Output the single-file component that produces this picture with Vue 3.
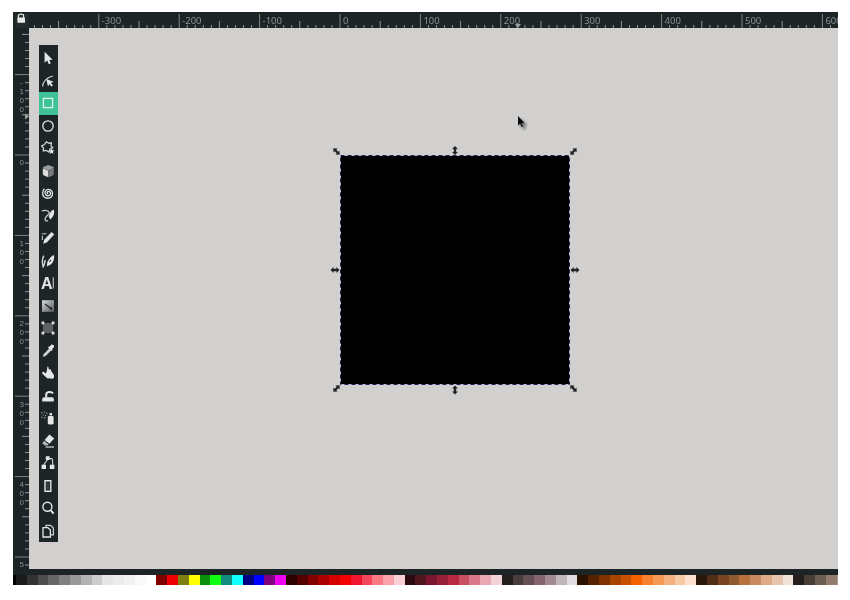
<script setup>
const W = '#e4e6e6'
const tools = [
  { id: 'selector', p: [{ d: 'M4.6 1.8V12.8L7.2 10.6 8.8 14.2 10.8 13.3 9.3 9.9 12.6 9.7Z', f: W }] },
  { id: 'node', p: [
    { d: 'M2.6 13.5C3 8.8 6.2 4.6 13 3', s: '#c9cccc', w: 1.2 },
    { d: 'M6.2 6 13.6 8.8 10.9 9.9 13 12.4 11.2 13.6 9.4 11 8 13.4Z', f: W }
  ] },
  { id: 'rect', active: true, p: [{ d: 'M3.4 3.4H12.6V12.6H3.4Z', s: '#e3f7ef', w: 1.3 }] },
  { id: 'ellipse', p: [{ d: 'M13.2 8A5.2 5.2 0 1 1 2.8 8 5.2 5.2 0 1 1 13.2 8Z', s: W, w: 1.3 }] },
  { id: 'star', p: [
    { d: 'M6.4 1.8 8.8 3.2 11.4 2.8 11 6 12.8 7.8 10 9 8.9 12 6.2 10.4 3.4 11 3.4 8 1.6 6 4.4 4.6Z', s: '#d0d3d3', w: 1.3 },
    { d: 'M11.6 8.2 12.4 10.2 14.6 10.4 13 11.8 13.5 14 11.6 12.8 9.7 14 10.2 11.8 8.6 10.4 10.8 10.2Z', f: W }
  ] },
  { id: 'box', p: [
    { d: 'M8.2 2 13.6 4 13.8 5 8.8 7.6 2.8 5.2 3.2 4Z', f: '#9b9e9e' },
    { d: 'M2.8 5.4 8.4 7.8V14.2L4 12.6C3.2 12.2 2.8 11.6 2.8 10.8Z', f: '#dcdede' },
    { d: 'M8.8 7.8 13.8 5.2V10.8C13.8 11.6 13.4 12.2 12.6 12.6L8.8 14.2Z', f: '#767a7a' }
  ] },
  { id: 'spiral', p: [{ d: 'M8.2 8.4C7.4 8.8 6.8 7.8 7.4 7 8.4 5.8 10.6 6.6 10.6 8.6 10.6 10.8 7.4 11.6 5.8 9.8 4 7.8 5.4 4.6 8.2 4.4 11.4 4.2 13.4 7.4 12.2 10.4 11 13.4 6.8 14.2 4.2 12 2 10 2.2 6 4.4 3.8', s: W, w: 1.3 }] },
  { id: 'bezier', p: [
    { d: 'M1.8 2.8C5 2.2 9 2.2 9.2 4.6 9.4 6.8 5 8.4 5 11.2 5 12.8 6.6 13.4 8 12.6', s: '#c6caca', w: 1.3 },
    { d: 'M13.4 1.4C14.8 3.2 14.4 6.2 12.2 9.4L10.2 11.4 8.8 8.6C9 5.8 10.8 2.8 13.4 1.4Z', f: W }
  ] },
  { id: 'pencil', p: [
    { d: 'M1.8 4.2C3.4 2.8 4.6 4.8 6.2 3.4', s: '#bfc3c3', w: 1.1 },
    { d: 'M2.4 5.8V10', s: '#bfc3c3', w: 1.1 },
    { d: 'M11.6 2 14.2 4.6 6.8 12.4 3.2 13.8 4.2 9.8Z', f: W }
  ] },
  { id: 'callig', p: [
    { d: 'M3.8 2.6C2.2 6 2 10 3.2 13.8 4.6 12 4.8 9.6 5.2 7', s: '#d5d8d8', w: 1.4 },
    { d: 'M14 2C14.6 5.4 13.6 9.2 10.8 11.6L6.8 13.6 7.4 9C9 5.8 11.2 3 14 2Z', f: W },
    { d: 'M9.4 9 11 7', s: '#1d2527', w: 1.1 }
  ] },
  { id: 'text', text: 'A', p: [{ d: 'M13.3 2.2V13.6', s: '#a9adad', w: 1.3 }] },
  { id: 'gradient', grad: true, p: [
    { d: 'M5 6 11 10.6', s: '#1d2527', w: 1.2 },
    { d: 'M9.8 9.4H12V11.6H9.8Z', f: '#181e20' }
  ] },
  { id: 'mesh', p: [
    { d: 'M3 3H13V13H3Z', f: '#5c6060' },
    { d: 'M1.6 1.6H4.2V4.2H1.6ZM11.8 1.6H14.4V4.2H11.8ZM1.6 11.8H4.2V14.4H1.6ZM11.8 11.8H14.4V14.4H11.8Z', f: W }
  ] },
  { id: 'dropper', p: [
    { d: 'M3 14 3.6 11.2 9.2 5.4 11.2 7.4 5.6 13Z', f: '#d0d3d3' },
    { d: 'M9.4 3.8 11.6 1.6C12.6 1 14.6 2.8 14 4L12 6.2 12.6 6.8 11.4 8 8 4.6 8.8 3.6Z', f: W }
  ] },
  { id: 'bucket', p: [
    { d: 'M7.4 1.4C8.4 1.2 8.8 3 8.8 4.6L9 4.8C9.8 3.4 11 4.2 11 5.8L13.6 9.4C14.6 11.4 14 13.6 12.2 13.8 10.6 14 10.2 12.8 8.8 13.4 7.4 14 6.4 12.8 5.6 11.8L2.4 8.8C1.6 7.4 3 6.2 4.2 7.2L5.8 8.6 6.8 6Z', f: W }
  ] },
  { id: 'tweak', p: [
    { d: 'M2.2 13.6V11.4C2.2 10 3.2 9.2 4.4 9.2H12C13.2 9.2 13.8 10 13.8 11.4V13.6Z', f: W },
    { d: 'M6.2 9.6V6.8C6.2 3.6 11.4 3 13 5.6', s: W, w: 2 }
  ] },
  { id: 'spray', p: [
    { d: 'M1.2 2.2H2.4V3.4H1.2ZM3.8 1.4H5V2.6H3.8ZM6.2 2.8H7.4V4H6.2ZM2.6 4.4H3.8V5.6H2.6ZM5 5H6.2V6.2H5ZM1.4 6.8H2.6V8H1.4ZM4 7.2H5.2V8.4H4Z', f: '#9a9e9e' },
    { d: 'M9.6 3H12V5.2H9.6Z', f: W },
    { d: 'M7.8 7C7.8 5.4 13.6 5.4 13.6 7V13.4C13.6 14.8 7.8 14.8 7.8 13.4Z', f: W }
  ] },
  { id: 'eraser', p: [
    { d: 'M9.4 1.6 14.2 5.4 9.4 10.8 4.6 7Z', f: W },
    { d: 'M4 7.8 8.6 11.4 7.2 12.6H5L2.4 10.4Z', f: '#b5b9b9' },
    { d: 'M5.6 14H14', s: '#c9cccc', w: 1.3 }
  ] },
  { id: 'connector', p: [
    { d: 'M8 4 3.6 10M8 3.6H11.4C12.4 3.6 12.6 5 12.6 6V10', s: '#d0d3d3', w: 1.1 },
    { d: 'M5.8 1.2H9.6V5H5.8ZM1.6 9.8H6V14H1.6ZM9.8 9.8H14.4V14H9.8Z', f: W }
  ] },
  { id: 'measure', p: [
    { d: 'M5 2.8H10.8V13.2H5Z', s: W, w: 1.4 },
    { d: 'M6.4 4.4H9.4V11.6H6.4Z', f: '#3a4042' }
  ] },
  { id: 'zoom', p: [
    { d: 'M11.9 6.8A4.5 4.5 0 1 1 2.9 6.8 4.5 4.5 0 1 1 11.9 6.8Z', s: W, w: 1.4 },
    { d: 'M10.6 10.2 13.6 13.6', s: W, w: 1.9 }
  ] },
  { id: 'pages', p: [
    { d: 'M6 4V2.4H10.6L13.4 5V11.8H10.8', s: '#d0d3d3', w: 1.2 },
    { d: 'M3 4.6H7.8L10.4 7V14H3Z', s: W, w: 1.3 }
  ] }
]

const topTicks = []
for (let i = -38; i <= 62; i++) {
  const major = i % 10 === 0
  const half = i % 5 === 0
  topTicks.push({
    i,
    x: 340 + i * 8.04,
    y1: major ? 14 : half ? 21 : 25,
    c: major ? '#7f8787' : '#8c9494'
  })
}
const topLabels = [-300, -200, -100, 0, 100, 200, 300, 400, 500, 600].map(v => ({
  v,
  x: 340 + (v / 100) * 80.4 + 3
}))

const leftTicks = []
for (let i = -16; i <= 52; i++) {
  const major = i % 10 === 0
  const half = i % 5 === 0
  leftTicks.push({
    i,
    y: 155 + i * 8.04,
    x1: major ? 15 : half ? 22 : 25,
    c: major ? '#7f8787' : '#8c9494'
  })
}
const leftDigits = []
for (const [v, label] of [[-100, '-100'], [0, '0'], [100, '100'], [200, '200'], [300, '300'], [400, '400'], [500, '5']]) {
  label.split('').forEach((ch, j) => {
    leftDigits.push({
      k: v + '-' + j,
      ch,
      y: 155 + (v / 100) * 80.4 + 10.4 + j * 9
    })
  })
}

const palette = [
  '#1a1a1a','#333333','#4d4d4d','#666666','#808080','#999999','#b3b3b3','#cccccc','#e6e6e6','#ececec','#f2f2f2','#f9f9f9','#ffffff',
  '#800000','#ee0000','#7f7f10','#ffff00','#0a8f0a','#10ff10','#128a7e','#10ffff','#000080','#0000ff','#800080','#f000f0',
  '#2b0000','#550000','#800000','#aa0000','#d40000','#f50000','#f01632','#f4465a','#f77a85','#f9a2ad','#f8d0d5',
  '#2a0a10','#501620','#7a1530','#962038','#b82840','#c85060','#d87888','#e8a8b4','#f2d4d8',
  '#241f1f','#483c3c','#655055','#856570','#a08a90','#c0b5b8','#e0dce0',
  '#2b1100','#552200','#803300','#a84400','#c85000','#f56000','#f5802f','#f59a55','#f5b080','#f5caa5','#fde0d0',
  '#28170b','#502d16','#784421','#8f5a30','#b8703c','#c98a5f','#deaa87','#e6c4ae','#f0e3d7',
  '#241f1c','#483e37','#6c5d53','#917c6f','#ac9d93'
]

const handles = [
  { k: 'nw', x: 336.5, y: 151.5, r: 45 },
  { k: 'n', x: 455, y: 150.5, r: 90 },
  { k: 'ne', x: 573.5, y: 151.5, r: -45 },
  { k: 'e', x: 575, y: 270, r: 0 },
  { k: 'se', x: 573.5, y: 388.5, r: 45 },
  { k: 's', x: 455, y: 390, r: 90 },
  { k: 'sw', x: 336.5, y: 388.5, r: -45 },
  { k: 'w', x: 335, y: 270, r: 0 }
]
</script>

<template>
  <div class="app">
    <div class="corner">
      <svg width="16" height="16" viewBox="0 0 16 16">
        <path d="M5.4 6V3.8C5.4 1.6 10.6 1.6 10.6 3.8V6" fill="none" stroke="#e8eaea" stroke-width="1.3" />
        <path d="M5 5.6H11.4Q12 5.6 12 6.2V10.2Q12 10.8 11.4 10.8H5Q4.4 10.8 4.4 10.2V6.2Q4.4 5.6 5 5.6Z" fill="#e8eaea" />
      </svg>
    </div>

    <svg class="ruler-top" width="809" height="16" viewBox="29 12 809 16">
      <line v-for="t in topTicks" :key="t.i" :x1="t.x" :x2="t.x" :y1="t.y1" y2="28" :stroke="t.c" stroke-width="1" />
      <text v-for="l in topLabels" :key="l.v" class="ruler-text" :x="l.x" y="24">{{ l.v }}</text>
      <path d="M515 24H521L518 28Z" fill="#9aa2a2" />
    </svg>

    <svg class="ruler-left" width="16" height="541" viewBox="13 28 16 541">
      <line v-for="t in leftTicks" :key="t.i" :x1="t.x1" x2="29" :y1="t.y" :y2="t.y" :stroke="t.c" stroke-width="1" />
      <text v-for="d in leftDigits" :key="d.k" class="ruler-digit" x="21.7" text-anchor="middle" :y="d.y">{{ d.ch }}</text>
      <path d="M25 113.5V119.5L29 116.5Z" fill="#9aa2a2" />
    </svg>

    <main class="canvas">
      <svg class="drawing" width="809" height="541" viewBox="29 28 809 541">
        <defs>
          <path id="dbl-arrow" d="M-4.5 0-1.4-2.9V-1.2H1.4V-2.9L4.5 0 1.4 2.9V1.2H-1.4V2.9Z" />
          <filter id="soft" x="-50%" y="-50%" width="200%" height="200%">
            <feGaussianBlur stdDeviation="1" />
          </filter>
        </defs>
        <rect x="340.5" y="155.5" width="229" height="229" fill="#000" />
        <rect x="340.5" y="155.5" width="229" height="229" fill="none" stroke="#c4c0dc" stroke-width="1" />
        <rect x="340.5" y="155.5" width="229" height="229" fill="none" stroke="#20204a" stroke-width="1" stroke-dasharray="4 3" />
        <use v-for="h in handles" :key="h.k" href="#dbl-arrow" fill="#232323"
          :transform="`translate(${h.x} ${h.y}) rotate(${h.r})`" />
        <path d="M520 118V128L522.4 126 524 130 526 129 524.4 125.4 527.6 125.2Z" fill="#777" filter="url(#soft)" />
        <path d="M518 116V125.6L520.2 123.6 521.8 127 523 126.4 521.5 123 524.4 122.8Z" fill="#0a0a0a" />
      </svg>

      <nav class="toolbar">
        <div v-for="t in tools" :key="t.id" class="tool" :class="{ active: t.active }">
          <svg width="16" height="16" viewBox="0 0 16 16">
            <defs v-if="t.grad">
              <linearGradient id="grad-fill" x1="0" y1="0" x2="1" y2="1">
                <stop offset="0" stop-color="#d8dada" />
                <stop offset="1" stop-color="#555a5a" />
              </linearGradient>
            </defs>
            <rect v-if="t.grad" x="2" y="2.2" width="12" height="11.6" fill="url(#grad-fill)" />
            <text v-if="t.text" class="tool-text" x="1" y="13.6">{{ t.text }}</text>
            <path v-for="(p, n) in t.p" :key="n" :d="p.d"
              :fill="p.f || 'none'" :stroke="p.s || 'none'" :stroke-width="p.w || 0" />
          </svg>
        </div>
      </nav>
    </main>

    <div class="status"></div>

    <div class="palette">
      <span class="swatch first"></span>
      <span v-for="(c, i) in palette" :key="i" class="swatch" :style="{ background: c }"></span>
    </div>
  </div>
</template>

<style>
html, body {
  background: #ffffff;
}
</style>

<style scoped>
.app {
  display: grid;
  grid-template-columns: 16px 809px;
  grid-template-rows: 16px 541px 6px 10px;
  width: 825px;
  margin: 12px 0 0 13px;
  background: #1c2426;
  filter: blur(0.4px);
  overflow: hidden;
}
.corner {
  background: #252c2e;
  box-shadow: inset 2px 2px 0 #1c2426;
}
.corner svg,
.ruler-top,
.ruler-left,
.drawing,
.tool svg {
  display: block;
}
.ruler-text {
  font-family: "Noto Sans", sans-serif;
  font-size: 9.5px;
  fill: #8a9292;
}
.ruler-digit {
  font-family: "Liberation Sans", sans-serif;
  font-size: 8px;
  fill: #8a9292;
}
.canvas {
  position: relative;
  background: #d1d0ce;
  box-shadow: inset 1px 0 0 #c6cbca;
  overflow: hidden;
}
.toolbar {
  position: absolute;
  left: 10px;
  top: 17px;
  width: 19px;
  height: 497px;
  box-sizing: border-box;
  padding-top: 2px;
  display: flex;
  flex-direction: column;
  background: #1d2527;
}
.tool {
  flex: 1;
  display: flex;
  align-items: center;
  justify-content: center;
  padding-right: 1px;
}
.tool.active {
  background: #3fc295;
}
.tool-text {
  font-family: "Liberation Sans", sans-serif;
  font-size: 16px;
  font-weight: 700;
  fill: #e4e6e6;
}
.status {
  grid-column: 1 / 3;
  background: #1c2426;
}
.palette {
  grid-column: 1 / 3;
  display: flex;
  overflow: hidden;
  background: #000;
}
.swatch {
  flex: none;
  width: 10.8px;
  height: 10px;
}
.swatch.first {
  width: 3px;
  background: #000;
}
</style>
